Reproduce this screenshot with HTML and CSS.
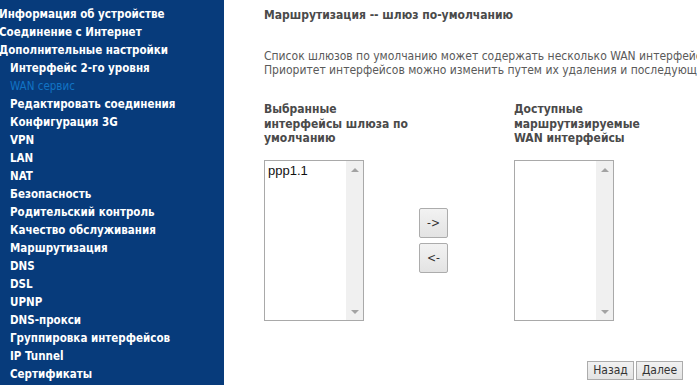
FILE: index.html
```html
<!DOCTYPE html>
<html lang="ru">
<head>
<meta charset="utf-8">
<title>Маршрутизация</title>
<link rel="stylesheet" href="styles.css">
</head>
<body>
<div class="page">
  <nav class="side">
    <a class="item top">Информация об устройстве</a>
    <a class="item top">Соединение с Интернет</a>
    <a class="item top">Дополнительные настройки</a>
    <a class="item sub">Интерфейс 2-го уровня</a>
    <a class="item sub active">WAN сервис</a>
    <a class="item sub">Редактировать соединения</a>
    <a class="item sub">Конфигурация 3G</a>
    <a class="item sub">VPN</a>
    <a class="item sub">LAN</a>
    <a class="item sub">NAT</a>
    <a class="item sub">Безопасность</a>
    <a class="item sub">Родительский контроль</a>
    <a class="item sub">Качество обслуживания</a>
    <a class="item sub">Маршрутизация</a>
    <a class="item sub">DNS</a>
    <a class="item sub">DSL</a>
    <a class="item sub">UPNP</a>
    <a class="item sub">DNS-прокси</a>
    <a class="item sub">Группировка интерфейсов</a>
    <a class="item sub">IP Tunnel</a>
    <a class="item sub">Сертификаты</a>
  </nav>
  <main class="content">
    <h1 class="title">Маршрутизация -- шлюз по-умолчанию</h1>
    <div class="desc">
      <p>Список шлюзов по умолчанию может содержать несколько WAN интерфейсов, которые будут использоваться в качестве системных шлюзов по умолчанию.</p>
      <p>Приоритет интерфейсов можно изменить путем их удаления и последующего добавления в желаемом порядке.</p>
    </div>
    <div class="grid">
      <div class="head">Выбранные<br>интерфейсы шлюза по<br>умолчанию</div>
      <div class="head">Доступные<br>маршрутизируемые<br>WAN интерфейсы</div>
      <div class="cell">
        <div class="listbox">
          <div class="options"><div class="opt">ppp1.1</div></div>
          <div class="scroll"><span class="arr up"></span><span class="arr down"></span></div>
        </div>
        <div class="moves">
          <button class="btn move">-&gt;</button>
          <button class="btn move">&lt;-</button>
        </div>
      </div>
      <div class="cell">
        <div class="listbox">
          <div class="options"></div>
          <div class="scroll"><span class="arr up"></span><span class="arr down"></span></div>
        </div>
      </div>
    </div>
    <div class="actions">
      <button class="btn nav">Назад</button>
      <button class="btn nav">Далее</button>
    </div>
  </main>
</div>
</body>
</html>
```
FILE: styles.css
```css
html, body {
  margin: 0;
  padding: 0;
  background: #ffffff;
}
.page {
  display: flex;
  width: 697px;
  height: 385px;
  overflow: hidden;
}
.side {
  width: 224px;
  flex: none;
  background: #073b7b;
  padding-top: 5px;
  display: flex;
  flex-direction: column;
  font-family: "DejaVu Sans Condensed", "DejaVu Sans", sans-serif;
  font-weight: bold;
  font-size: 11.5px;
}
.item {
  display: block;
  flex: none;
  height: 18px;
  line-height: 18px;
  color: #ffffff;
  white-space: nowrap;
}
.item.top { padding-left: 0; margin-left: -1px; }
.item.sub { padding-left: 10px; }
.item.active {
  color: #1273c4;
  font-weight: normal;
}
.content {
  flex: 1;
  min-width: 0;
  padding-left: 40px;
  font-family: "DejaVu Sans Condensed", "DejaVu Sans", sans-serif;
  font-size: 12px;
  color: #505050;
  display: flex;
  flex-direction: column;
}
.title {
  margin: 8px 0 0;
  font-size: 12px;
  line-height: 14px;
  font-weight: bold;
  color: #4a4a4a;
}
.desc {
  margin-top: 27px;
  overflow: hidden;
}
.desc p {
  margin: 0;
  line-height: 14px;
  white-space: nowrap;
  color: #5a5a5a;
}
.grid {
  margin-top: 25px;
  display: grid;
  grid-template-columns: 250px 250px;
  row-gap: 14px;
}
.head {
  font-weight: bold;
  line-height: 14.5px;
  color: #4a4a4a;
}
.cell {
  display: flex;
  align-items: center;
}
.listbox {
  width: 98px;
  height: 159px;
  border: 1px solid #a9a9a9;
  display: flex;
  background: #fff;
}
.options {
  flex: 1;
  padding: 2px 0 0 3px;
}
.opt {
  font-family: "Liberation Sans", Arial, sans-serif;
  font-size: 13px;
  line-height: 15px;
  color: #111;
}
.scroll {
  width: 17px;
  background: #f0f0f0;
  display: flex;
  flex-direction: column;
  justify-content: space-between;
  align-items: center;
  padding: 7px 0 6px;
}
.arr {
  width: 0;
  height: 0;
  border-left: 4px solid transparent;
  border-right: 4px solid transparent;
}
.arr.up { border-bottom: 4px solid #a3a3a3; }
.arr.down { border-top: 4px solid #a3a3a3; }
.moves {
  margin-left: 55px;
  display: flex;
  flex-direction: column;
  gap: 5px;
}
.btn {
  font-family: "DejaVu Sans Condensed", "DejaVu Sans", sans-serif;
  font-size: 12px;
  color: #333;
  border: 1px solid #acacac;
  border-radius: 2px;
  background: linear-gradient(#f2f2f2, #e3e3e3);
  padding: 0;
  margin: 0;
}
.move {
  width: 29px;
  height: 30px;
}
.actions {
  margin-top: 40px;
  display: flex;
  justify-content: flex-end;
  gap: 2px;
  padding-right: 14px;
}
.nav {
  width: 47px;
  height: 19px;
  line-height: 17px;
  border-radius: 0;
}
```
